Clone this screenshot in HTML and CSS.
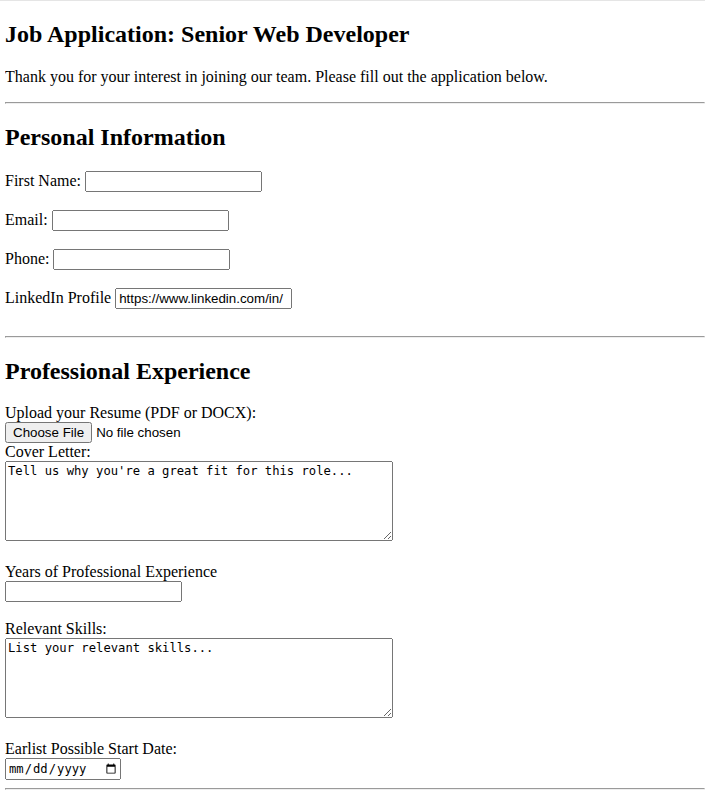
FILE: index.html
```html
<!DOCTYPE html>
<html lang="en">
<head>
    <meta charset="UTF-8">
    <meta name="viewport" content="width=device-width, initial-scale=1.0">
    <title>Job Application</title>
<link rel="stylesheet" href="styles.css">
</head>
<body>
    <h2>Job Application: Senior Web Developer</h2>
    <p>Thank you for your interest in joining our team. Please fill out the application below.</p>
    <hr>

    <form action="#" id="applyForm">
        <h2>Personal Information</h2>
        <p class="row"><label for="first">First Name:</label> <input type="text" id="first" class="field"></p>
        <p class="row"><label for="email">Email:</label> <input type="email" id="email" class="field"></p>
        <p class="row"><label for="phone">Phone:</label> <input type="tel" id="phone" class="field"></p>
        <p class="row"><label for="linkedin">LinkedIn Profile</label> <input type="url" id="linkedin" class="field" value="https://www.linkedin.com/in/"></p>

        <hr class="section-break">

        <h2>Professional Experience</h2>
        <div class="block">
            <label for="resume">Upload your Resume (PDF or DOCX):</label><br>
            <input type="file" id="resume" class="file" accept=".pdf,.docx"><br>
            <label for="cover">Cover Letter:</label><br>
            <textarea id="cover" class="box" placeholder="Tell us why you're a great fit for this role..."></textarea><br><br>
            <label for="years">Years of Professional Experience</label><br>
            <input type="number" id="years" class="field"><br><br>
            <label for="skills">Relevant Skills:</label><br>
            <textarea id="skills" class="box" placeholder="List your relevant skills..."></textarea><br><br>
            <label for="start">Earlist Possible Start Date:</label><br>
            <input type="date" id="start" class="date">
        </div>
        <hr>
    </form>
</body>
</html>
```
FILE: styles.css
```css
html {
    border-top: 1px solid #e5e5e5;
}
body {
    margin: 0 0 8px 5px;
    font-family: "Liberation Serif", "Times New Roman", serif;
    font-size: 16px;
    color: #000;
}
h2 {
    font-size: 24px;
}
.row {
    min-height: 23px;
}
.field {
    box-sizing: border-box;
    width: 177px;
    height: 21px;
    font-family: "Liberation Sans", Arial, sans-serif;
    font-size: 13.33px;
}
.field::-webkit-inner-spin-button {
    display: none;
}
.file {
    font-family: "Liberation Sans", Arial, sans-serif;
    font-size: 13.33px;
}
.box {
    box-sizing: border-box;
    width: 388px;
    height: 80px;
    font-family: "DejaVu Sans Mono", monospace;
    font-size: 12.2px;
}
.box::placeholder {
    color: #000;
}
.date {
    box-sizing: border-box;
    width: 116px;
    height: 22px;
    font-family: "DejaVu Sans Mono", monospace;
    font-size: 12.2px;
}
.section-break {
    margin-top: 25px;
}
.block {
    margin-top: 16px;
}
```
